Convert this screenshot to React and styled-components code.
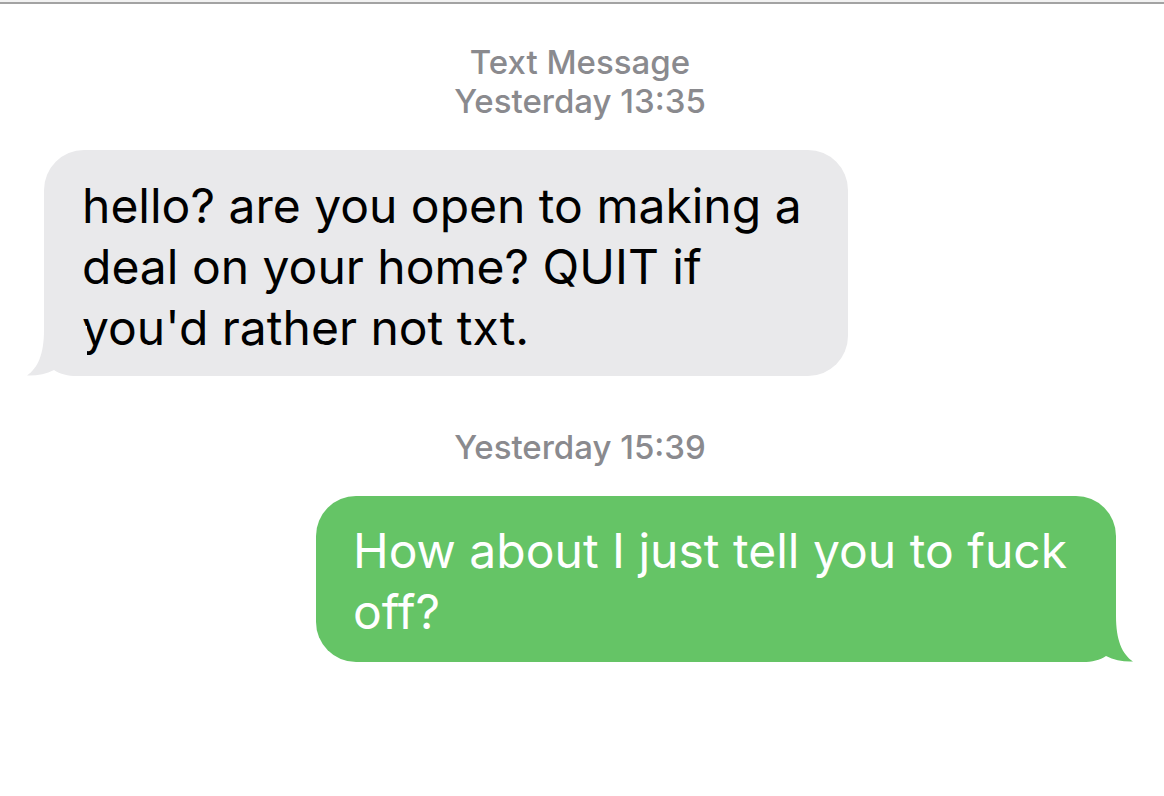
import React from 'react';
import styled, { createGlobalStyle } from 'styled-components';

const Global = createGlobalStyle`
  html, body {
    margin: 0;
    padding: 0;
    background: #ffffff;
  }
  body {
    font-family: Inter, "Liberation Sans", Arial, sans-serif;
  }
`;

const TopEdge = styled.div`
  height: 2px;
  background: #f2f2f2;
  border-bottom: 2px solid #a3a3a3;
`;

const Thread = styled.div`
  display: flex;
  flex-direction: column;
  padding: 39px 48px 0 44px;
`;

const Stamp = styled.div`
  text-align: center;
  color: #8a8a8e;
  font-size: 33px;
  font-weight: 500;
  line-height: 39px;
  margin: ${(p) => p.$margin || '0'};
`;

const Row = styled.div`
  display: flex;
  justify-content: ${(p) => (p.$out ? 'flex-end' : 'flex-start')};
`;

const Bubble = styled.div`
  position: relative;
  width: ${(p) => p.$width}px;
  box-sizing: border-box;
  padding: ${(p) => (p.$out ? '24px 38px 20px 37px' : '25px 38px 18px 38px')};
  border-radius: 40px;
  background: ${(p) => (p.$out ? '#65c466' : '#e9e9eb')};
  color: ${(p) => (p.$out ? '#ffffff' : '#000000')};
  font-size: 48px;
  line-height: 61px;
`;

const Tail = styled.svg`
  position: absolute;
  bottom: 0;
  ${(p) => (p.$out ? 'right: -17px; transform: scaleX(-1);' : 'left: -17px;')}
  width: 60px;
  height: 50px;
`;

const BubbleTail = ({ out, color }) => (
  <Tail $out={out} viewBox="0 0 60 50">
    <path
      d="M17 4 C17 28 11 42 0 49.5 C9 50 19 48 27 44 C33 48 41 50 50 50 L60 50 L60 0 L17 0 Z"
      fill={color}
    />
  </Tail>
);

export default function App() {
  return (
    <>
      <Global />
      <TopEdge />
      <Thread>
        <Stamp>Text Message</Stamp>
        <Stamp $margin="0 0 29px">Yesterday 13:35</Stamp>
        <Row>
          <Bubble $width={804}>
            hello? are you open to making a<br />
            deal on your home? QUIT if<br />
            you'd rather not txt.
            <BubbleTail color="#e9e9eb" />
          </Bubble>
        </Row>
        <Stamp $margin="52px 0 29px">Yesterday 15:39</Stamp>
        <Row $out>
          <Bubble $out $width={800}>
            How about I just tell you to fuck<br />
            off?
            <BubbleTail out color="#65c466" />
          </Bubble>
        </Row>
      </Thread>
    </>
  );
}
